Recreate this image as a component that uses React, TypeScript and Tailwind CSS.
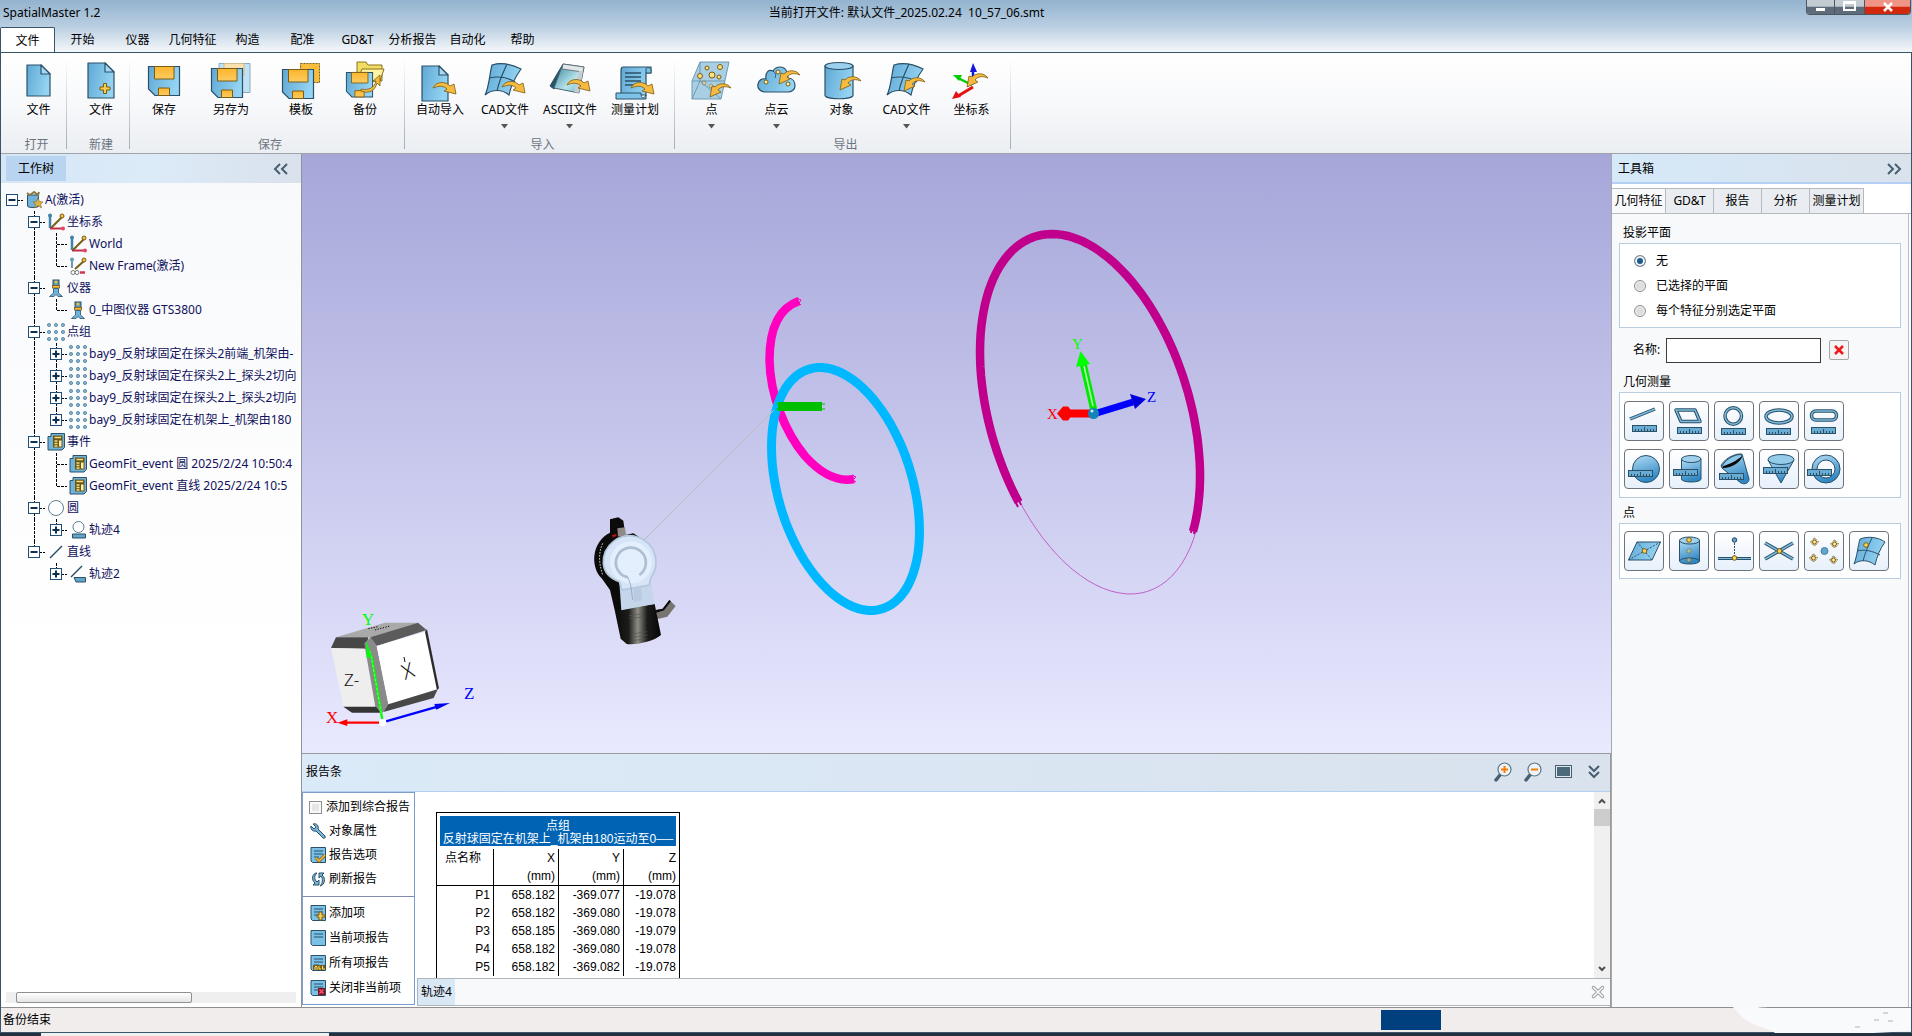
import { useState } from 'react'
import type { ReactNode } from 'react'

type Point = { name: string; x: string; y: string; z: string }
type Guide = 'none' | 'line' | 'tee' | 'elbow'

interface TreeRow {
  label: string
  icon: string
  guides: Guide[]
  box?: 'minus' | 'plus'
}

const MENU = ['文件', '开始', '仪器', '几何特征', '构造', '配准', 'GD&T', '分析报告', '自动化', '帮助']

const TREE: TreeRow[] = [
  { label: 'A(激活)', icon: 'job', guides: ['none'], box: 'minus' },
  { label: '坐标系', icon: 'frame', guides: ['none', 'tee'], box: 'minus' },
  { label: 'World', icon: 'frame', guides: ['none', 'line', 'tee'] },
  { label: 'New Frame(激活)', icon: 'frameActive', guides: ['none', 'line', 'elbow'] },
  { label: '仪器', icon: 'device', guides: ['none', 'tee'], box: 'minus' },
  { label: '0_中图仪器 GTS3800', icon: 'device', guides: ['none', 'line', 'elbow'] },
  { label: '点组', icon: 'points', guides: ['none', 'tee'], box: 'minus' },
  { label: 'bay9_反射球固定在探头2前端_机架由-', icon: 'points', guides: ['none', 'line', 'tee'], box: 'plus' },
  { label: 'bay9_反射球固定在探头2上_探头2切向', icon: 'points', guides: ['none', 'line', 'tee'], box: 'plus' },
  { label: 'bay9_反射球固定在探头2上_探头2切向', icon: 'points', guides: ['none', 'line', 'tee'], box: 'plus' },
  { label: 'bay9_反射球固定在机架上_机架由180', icon: 'points', guides: ['none', 'line', 'elbow'], box: 'plus' },
  { label: '事件', icon: 'event', guides: ['none', 'tee'], box: 'minus' },
  { label: 'GeomFit_event 圆 2025/2/24 10:50:4', icon: 'event', guides: ['none', 'line', 'tee'] },
  { label: 'GeomFit_event 直线 2025/2/24 10:5', icon: 'event', guides: ['none', 'line', 'elbow'] },
  { label: '圆', icon: 'circle', guides: ['none', 'tee'], box: 'minus' },
  { label: '轨迹4', icon: 'circleRuler', guides: ['none', 'line', 'elbow'], box: 'plus' },
  { label: '直线', icon: 'line', guides: ['none', 'elbow'], box: 'minus' },
  { label: '轨迹2', icon: 'lineRuler', guides: ['none', 'none', 'elbow'], box: 'plus' },
]

const POINTS: Point[] = [
  { name: 'P1', x: '658.182', y: '-369.077', z: '-19.078' },
  { name: 'P2', x: '658.182', y: '-369.080', z: '-19.078' },
  { name: 'P3', x: '658.185', y: '-369.080', z: '-19.079' },
  { name: 'P4', x: '658.182', y: '-369.080', z: '-19.078' },
  { name: 'P5', x: '658.182', y: '-369.082', z: '-19.078' },
]

const TOOL_TABS = [
  { label: '几何特征', width: 'w-[54px]' },
  { label: 'GD&T', width: 'w-12' },
  { label: '报告', width: 'w-12' },
  { label: '分析', width: 'w-12' },
  { label: '测量计划', width: 'w-[54px]' },
]

const INK = '#2b5068'
const GOLD = '#f9bd3b'
const GOLD_INK = '#7b5c14'

function Gradients() {
  return (
    <svg className="absolute h-0 w-0" aria-hidden="true">
      <defs>
        <linearGradient id="blue" x1="0" x2="1" y1="0" y2="0.3">
          <stop offset="0" stopColor="#5fa8d4" />
          <stop offset="1" stopColor="#94d3f2" />
        </linearGradient>
        <linearGradient id="solid" x1="0" x2="0.3" y1="0" y2="1">
          <stop offset="0" stopColor="#b4def5" />
          <stop offset="1" stopColor="#2f87c4" />
        </linearGradient>
        <linearGradient id="gold" x1="0" x2="0" y1="0" y2="1">
          <stop offset="0" stopColor="#fbb62c" />
          <stop offset="1" stopColor="#fccb63" />
        </linearGradient>
        <linearGradient id="glass" x1="0" x2="1" y1="0" y2="1">
          <stop offset="0" stopColor="#2f8098" />
          <stop offset="0.6" stopColor="#b9e4ec" />
          <stop offset="1" stopColor="#5cb3c9" />
        </linearGradient>
        <linearGradient id="barrel" x1="0" x2="1" y1="0" y2="0">
          <stop offset="0" stopColor="#0a0a0a" />
          <stop offset="0.3" stopColor="#1c1c1a" />
          <stop offset="0.5" stopColor="#8f8e85" />
          <stop offset="0.7" stopColor="#1c1c1a" />
          <stop offset="1" stopColor="#050505" />
        </linearGradient>
      </defs>
    </svg>
  )
}

// ---------- ribbon icons, 40x40 ----------

function Floppy({ x, y, size = 32 }: { x: number; y: number; size?: number }) {
  return (
    <g transform={`translate(${x} ${y}) scale(${size / 32})`}>
      <path d="M.5 .5H31.5V29.5H7L.5 23Z" fill="url(#blue)" stroke={INK} strokeWidth="1.2" />
      <path d="M6.5 .5H26V13H6.5Z" fill="url(#gold)" stroke={GOLD_INK} />
      <path d="M10.500 22H21.500V29.500H10.500Z" fill="url(#gold)" stroke={GOLD_INK} />
    </g>
  )
}

function Sheet({ x, y, w, h }: { x: number; y: number; w: number; h: number }) {
  return (
    <g transform={`translate(${x} ${y})`} stroke={INK} strokeWidth="1.2" strokeLinejoin="round">
      <path d={`M0 0H${w - 9}L${w} 9V${h}H0Z`} fill="url(#blue)" />
      <path d={`M${w - 9} 0V9H${w}Z`} fill="#a6daf3" />
    </g>
  )
}

// curved arrow leaving (import) or entering (export) the object
function SwoopOut({ x, y }: { x: number; y: number }) {
  return (
    <path
      transform={`translate(${x} ${y})`}
      d="M0 6C3 -1 13 -1 17 4L21 2L23 12L11 9L14 7C10 3 5 4 0 6Z"
      fill="#f5ba3e"
      stroke={GOLD_INK}
      strokeWidth="0.8"
      strokeLinejoin="round"
    />
  )
}

function SwoopIn({ x, y }: { x: number; y: number }) {
  return (
    <path
      transform={`translate(${x} ${y})`}
      d="M21 5C17 -1 8 0 5 4L2 3L0 14L11 9L8 7C11 3 16 3 21 5Z"
      fill="#f5ba3e"
      stroke={GOLD_INK}
      strokeWidth="0.8"
      strokeLinejoin="round"
    />
  )
}

function Patch() {
  return (
    <g stroke={INK} strokeWidth="1.2" fill="none">
      <path d="M7 4C16 1 26 3 36 8C31 15 26 24 24 34C17 28 7 28 0 34C4 27 5 10 7 4Z" fill="url(#blue)" />
      <path d="M22 3C18 12 14 20 12 30M4 17C13 15 22 16 30 21" />
    </g>
  )
}

function RibbonIcon({ name }: { name: string }) {
  const art: Record<string, ReactNode> = {
    open: <Sheet x={8} y={4} w={23} h={31} />,
    create: (
      <>
        <Sheet x={7} y={2} w={26} h={35} />
        <path d="M22.500 22.500H25.500V26H29V29H25.500V32.500H22.500V29H19V26H22.500Z" fill="#f8cd4a" stroke={GOLD_INK} strokeWidth="1" />
      </>
    ),
    save: <Floppy x={4} y={5} />,
    saveAs: (
      <>
        <path d="M8 2.500H39V31.500H30V9H8Z" fill="#c1e2f4" stroke="#8badc0" />
        <path d="M13 2.500H33V14H30V8H13Z" fill="#fbe1ad" stroke="#cdbb8b" />
        <Floppy x={0} y={7} />
      </>
    ),
    template: (
      <>
        <path d="M19.500 2.500H38.500V21.500H19.500Z" fill={GOLD} stroke={GOLD_INK} strokeDasharray="2 1" />
        <Floppy x={1} y={8} />
      </>
    ),
    backup: (
      <>
        <path d="M12 1H21L23 4H37V20H12Z" fill="#f2dc63" stroke="#8a741c" />
        <path d="M12 20L17 8H39L35 20Z" fill="#fdf3a0" stroke="#8a741c" />
        <Floppy x={1} y={11} size={27} />
        <path d="M16 28C24 30 30 26 31 20L28 20L35 14V25L32 22C30 30 24 33 16 30Z" fill="#f5ba3e" stroke={GOLD_INK} strokeWidth="0.8" />
      </>
    ),
    autoImport: (
      <>
        <Sheet x={2} y={5} w={26} h={35} />
        <SwoopOut x={13} y={21} />
      </>
    ),
    cadImport: (
      <>
        <Patch />
        <SwoopOut x={17} y={20} />
      </>
    ),
    ascii: (
      <>
        <path d="M13 3L0 25L4 28L15 10Z" fill="#24566b" stroke={INK} />
        <path d="M13 3L34 6L29 32L4 27Z" fill="url(#glass)" stroke="#53666e" />
        <path d="M13 3L34 6L33 11L12 8Z" fill="#e2e7ea" stroke="#53666e" strokeWidth="0.8" />
        <path d="M29 10L33 10L29 32L24 31Z" fill="#c6ccd0" />
        <SwoopOut x={17} y={18} />
      </>
    ),
    plan: (
      <>
        <path d="M8 6H36V12H31V34H6V12C6 8 6 6 8 6Z" fill="url(#blue)" stroke={INK} strokeWidth="1.2" />
        <path d="M31 12V8C31 6 36 6 36 9V12ZM1 32H26C26 38 29 38 31 34V38H1Z" fill="#7dc3e8" stroke={INK} />
        <path d="M10 12H26M10 16H26M10 20H26M10 24H20" stroke={INK} strokeWidth="1.4" />
        <SwoopOut x={16} y={21} />
      </>
    ),
    points: (
      <>
        <path d="M8 1H37L29 38H0V20Z" fill="#a9cfe4" stroke="#6f9ab4" />
        <path d="M0 20H33M8 1V20L0 38M8 20L29 38" stroke="#6f9ab4" fill="none" />
        <g fill="#fce079" stroke={GOLD_INK}>
          <circle cx="15" cy="7" r="2" />
          <circle cx="28" cy="6" r="2.500" />
          <circle cx="8" cy="15" r="2.500" />
          <circle cx="20" cy="14" r="3" />
          <circle cx="27" cy="16" r="2" />
          <circle cx="12" cy="22" r="2" opacity="0.5" />
          <circle cx="19" cy="25" r="2" opacity="0.5" />
        </g>
        <SwoopIn x={18} y={22} />
      </>
    ),
    cloud: (
      <>
        <path
          d="M9 31C3 31 0 27 1 23C2 19 5 17 9 18C8 11 12 8 16 10C19 5 27 4 30 11C31 13 31 15 31 17C36 17 38 21 38 25C38 29 34 31 31 31Z"
          fill="url(#blue)"
          stroke={INK}
          strokeWidth="1.2"
        />
        <path d="M16 10C19 12 19 15 18 17" stroke={INK} fill="none" />
        <g fill="#fff0b0" stroke={GOLD_INK}>
          <circle cx="21" cy="11" r="2" />
          <circle cx="9" cy="21" r="2" />
          <circle cx="31" cy="23" r="2" />
        </g>
        <SwoopIn x={22} y={9} />
      </>
    ),
    object: (
      <>
        <path d="M3 5V34C3 39 31 39 31 34V5Z" fill="url(#blue)" stroke={INK} strokeWidth="1.2" />
        <ellipse cx="17" cy="5" rx="14" ry="3.500" fill="#9bd0ee" stroke={INK} strokeWidth="1.200" />
        <SwoopIn x={18} y={15} />
      </>
    ),
    cadExport: (
      <>
        <Patch />
        <SwoopIn x={17} y={16} />
      </>
    ),
    axes: (
      <>
        <path d="M21 23V9" stroke="#1414e0" strokeWidth="2.500" />
        <path d="M21 2L25 11H18Z" fill="#1414e0" />
        <path d="M20 24L6 17" stroke="#0c0" strokeWidth="2.500" />
        <path d="M1 14L10 14L7 20Z" fill="#0c0" />
        <path d="M21 26L6 35" stroke="#e51212" strokeWidth="3" />
        <path d="M0 38L4 30L9 36Z" fill="#e51212" />
        <SwoopIn x={15} y={12} />
      </>
    ),
  }
  return <svg viewBox="0 0 40 40" className="h-10 w-10 overflow-visible" aria-hidden="true">{art[name]}</svg>
}

function RibbonButton({ icon, label, arrow, width = 'w-[65px]' }: { icon: string; label: string; arrow?: boolean; width?: string }) {
  return (
    <button className={`${width} flex h-[76px] shrink-0 flex-col items-center leading-[17px] hover:bg-sky-100`}>
      <RibbonIcon name={icon} />
      <span className="whitespace-nowrap">{label}</span>
      {arrow && (
        <svg viewBox="0 0 8 5" className="mt-[6px] h-[5px] w-2" aria-hidden="true">
          <path d="M0 0H7L3.500 4.500Z" fill="#555" />
        </svg>
      )}
    </button>
  )
}

function RibbonGroup({ title, width, pad = '', children }: { title: string; width: string; pad?: string; children: ReactNode }) {
  return (
    <section className={`${width} flex shrink-0 flex-col justify-between pt-2 pb-1`}>
      <div className={`${pad} flex justify-center`}>{children}</div>
      <h2 className="pl-[6px] text-center leading-4 text-[#6d7480]">{title}</h2>
    </section>
  )
}

function Separator() {
  return <div className="my-1 w-px shrink-0 bg-linear-to-b from-white to-[#a3adba]" />
}

function Ribbon() {
  return (
    <div className="flex h-[101px] shrink-0 border-b border-[#a0a4a8] bg-linear-to-b from-white via-[#f8f9fb] to-[#ebeef2]">
      <RibbonGroup title="打开" width="w-[65px]" pad="pl-[10px]">
        <RibbonButton icon="open" label="文件" width="w-[50px]" />
      </RibbonGroup>
      <Separator />
      <RibbonGroup title="新建" width="w-[62px]" pad="pl-[6px]">
        <RibbonButton icon="create" label="文件" width="w-[50px]" />
      </RibbonGroup>
      <Separator />
      <RibbonGroup title="保存" width="w-[274px]" pad="pr-[10px]">
        <RibbonButton icon="save" label="保存" width="w-[66px]" />
        <RibbonButton icon="saveAs" label="另存为" width="w-[68px]" />
        <RibbonButton icon="template" label="模板" width="w-[72px]" />
        <RibbonButton icon="backup" label="备份" width="w-14" />
      </RibbonGroup>
      <Separator />
      <RibbonGroup title="导入" width="w-[269px]" pad="pr-1">
        <RibbonButton icon="autoImport" label="自动导入" />
        <RibbonButton icon="cadImport" label="CAD文件" arrow />
        <RibbonButton icon="ascii" label="ASCII文件" arrow />
        <RibbonButton icon="plan" label="测量计划" />
      </RibbonGroup>
      <Separator />
      <RibbonGroup title="导出" width="w-[335px]" pad="pr-[2px]">
        <RibbonButton icon="points" label="点" arrow />
        <RibbonButton icon="cloud" label="点云" arrow />
        <RibbonButton icon="object" label="对象" />
        <RibbonButton icon="cadExport" label="CAD文件" arrow />
        <RibbonButton icon="axes" label="坐标系" />
      </RibbonGroup>
      <Separator />
    </div>
  )
}

// ---------- work tree ----------

function TreeIcon({ name }: { name: string }) {
  const art: Record<string, ReactNode> = {
    job: (
      <>
        <path d="M2.500 4V15C2.500 17 13.500 17 13.500 15V4Z" fill="#6fb2da" stroke={INK} />
        <path d="M2 2L5 4L9 1L13 4L14 1" stroke="#8a7a4a" strokeWidth="2" fill="none" />
        <path d="M13 7L14.500 10.500L18 11L15.500 13L16.500 17L13 14.500L9.500 17L10.500 13L8 11L11.500 10.500Z" fill="#e0b040" stroke="#7b6a34" strokeWidth="0.600" />
      </>
    ),
    frame: (
      <>
        <path d="M3 2V15" stroke="#3f83ab" strokeWidth="2.500" />
        <circle cx="3" cy="2.500" r="2" fill="#3f83ab" />
        <path d="M4 15L15 4" stroke={GOLD_INK} strokeWidth="2" />
        <circle cx="15" cy="3" r="2" fill="#f0c040" stroke={GOLD_INK} />
        <path d="M3 15.500H15" stroke="#c03048" strokeWidth="2" />
        <circle cx="16" cy="15.500" r="2" fill="#e04860" />
      </>
    ),
    frameActive: (
      <>
        <path d="M3 2V11" stroke="#6a9ab8" strokeWidth="2" />
        <circle cx="3" cy="2.500" r="2" fill="#6a9ab8" />
        <path d="M6 12L15 4" stroke={GOLD_INK} strokeWidth="2" />
        <circle cx="15" cy="3" r="2" fill="#f0c040" stroke={GOLD_INK} />
        <path d="M11 15.500H16" stroke="#d03850" strokeWidth="2.500" />
        <circle cx="4" cy="15.500" r="2" fill="#fff" stroke="#777" />
        <circle cx="8" cy="15.500" r="2" fill="#fff" stroke="#777" />
      </>
    ),
    device: (
      <>
        <rect x="6" y="1" width="6" height="6" fill="#5596bb" stroke={INK} />
        <circle cx="9" cy="3" r="1.500" fill={GOLD} />
        <rect x="5.500" y="6.500" width="7" height="2.500" fill={GOLD} stroke={GOLD_INK} strokeWidth="0.800" />
        <path d="M6.500 9.500H11.500V14L15.500 17.500H11L9 15.500L7 17.500H2.500L6.500 14Z" fill="#6fb2da" stroke={INK} strokeWidth="0.800" />
      </>
    ),
    points: (
      <g fill="#7fb6d3" stroke="#4f7f99" strokeWidth="0.800">
        {[2, 9, 16].map((x) => [2, 9, 16].map((y) => <circle key={`${x}-${y}`} cx={x} cy={y} r="1.600" />))}
      </g>
    ),
    event: (
      <>
        <path d="M1 3.500H4V.500H17.500V14.500L15 17H1Z" fill="#6fb2da" stroke={INK} />
        <rect x="6" y="2.500" width="9.500" height="12" fill="#6b5714" />
        <path d="M7.500 4.500H14M7.500 8H10.500M7.500 10.500H10.500M7.500 13H10.500" stroke="#f6dd80" strokeWidth="1.500" />
        <rect x="12" y="7.500" width="2.500" height="6" fill="#fff0b0" />
      </>
    ),
    circle: <circle cx="9" cy="9" r="7.500" fill="#fff" stroke="#5b7f94" />,
    circleRuler: (
      <>
        <circle cx="9.500" cy="6" r="5.500" fill="#fff" stroke="#5b7f94" />
        <path d="M3.500 13H16.500V17H3.500Z" fill="#63a4cb" stroke={INK} />
      </>
    ),
    line: <path d="M3 15L15 3" stroke={INK} strokeWidth="1.500" />,
    lineRuler: (
      <>
        <path d="M2 12L13 1" stroke={INK} strokeWidth="1.500" />
        <path d="M5 12.500H16.500V17H7Z" fill="#63a4cb" stroke={INK} />
      </>
    ),
  }
  return <svg viewBox="0 0 18 18" className="h-[18px] w-[18px]" aria-hidden="true">{art[name]}</svg>
}

function GuideCell({ guide, joined, box }: { guide: Guide; joined: boolean; box?: 'minus' | 'plus' }) {
  return (
    <svg viewBox="0 0 22 22" className="h-[22px] w-[22px] shrink-0" aria-hidden="true">
      <g stroke="#000" strokeDasharray="3 1" shapeRendering="crispEdges">
        {(guide === 'line' || guide === 'tee') && <path d="M11.500 0V22" />}
        {guide === 'elbow' && <path d="M11.500 0V11" />}
        {joined && <path d="M12 11.500H22" />}
      </g>
      {box && (
        <>
          <rect x="5.500" y="5.500" width="11" height="11" fill="#fff" stroke="#1f4e79" />
          <path d={box === 'minus' ? 'M7.500 11H14.500' : 'M7.500 11H14.500M11 7.500V14.500'} stroke="#0d2f50" strokeWidth="2" />
        </>
      )}
    </svg>
  )
}

function WorkTree() {
  return (
    <aside className="flex w-[301px] shrink-0 flex-col border-r border-[#8f9499] bg-linear-to-b from-[#f8f9fb] to-white to-60%">
      <div className="flex h-[29px] shrink-0 items-center justify-between bg-linear-to-r from-[#d6e6f5] via-[#dcebf8] to-[#d9e1ec] pr-3 pl-[5px]">
        <h2 className="bg-[#b9d4f0] px-3 leading-[25px]">工作树</h2>
        <button aria-label="收起" className="text-[#46606f]">
          <svg viewBox="0 0 16 12" className="h-3 w-4" fill="none" stroke="currentColor" strokeWidth="2">
            <path d="M7 1L2 6L7 11M14 1L9 6L14 11" />
          </svg>
        </button>
      </div>
      <ul className="mr-[5px] grow overflow-hidden pt-[6px] text-[#10105c]">
        {TREE.map((row, i) => (
          <li key={i} className="flex h-[22px] items-center whitespace-nowrap">
            {row.guides.map((g, k) => {
              const last = k === row.guides.length - 1
              return <GuideCell key={k} guide={g} joined={last} box={last ? row.box : undefined} />
            })}
            <span className="flex w-[22px] shrink-0 justify-center">
              <TreeIcon name={row.icon} />
            </span>
            <span>{row.label}</span>
          </li>
        ))}
      </ul>
      <div className="mx-[5px] mb-1 flex h-[11px] shrink-0 bg-[#efefef] pl-[10px]">
        <div className="w-44 rounded-xs border border-[#8f8f8f] bg-linear-to-b from-white to-[#e4e4e4]" />
      </div>
    </aside>
  )
}

// ---------- 3D view ----------

// Projected circle: half extents plus the phase between both axes
function ring(cx: number, cy: number, hx: number, hy: number, from: number, to: number) {
  const phase = 69.8
  const pts: string[] = []
  for (let i = 0; i <= 90; i++) {
    const t = from + ((to - from) * i) / 90
    const x = cx + hx * Math.cos((t * Math.PI) / 180)
    const y = cy + hy * Math.cos(((t - phase) * Math.PI) / 180)
    pts.push(`${x.toFixed(1)},${y.toFixed(1)}`)
  }
  return pts.join(' ')
}

function Viewport() {
  return (
    <div className="min-h-0 grow bg-linear-to-b from-[#a6a6d9] to-[#e9e9ff]">
      <svg viewBox="302 154 1309 599" className="h-full w-full" fill="none" role="img" aria-label="三维视图">
        <polyline points={ring(1092, 414, 111, 180, 0, 360)} stroke="#c060c8" />
        <polyline points={ring(1090, 414, 110, 180, 130.5, 380.5)} stroke="#c0008c" strokeWidth="8.500" />
        <path d="M1015 501L1018 507M1019 500L1021 505M1192 527L1191 533M1195 528L1194 534" stroke="#c0008c" strokeWidth="2" />

        <path d="M799 301C776 309 769.500 333 769.500 360C770 395 785 432 805 456C822 475 838 482 854 479" stroke="#ff00c0" strokeWidth="8.500" />
        <path d="M797 298L801 300L799 303L801 305M852 475L856 477L853 480L856 482" stroke="#ff00c0" />
        <polyline points={ring(845.5, 489, 74, 121.5, 0, 360)} stroke="#00b8ff" strokeWidth="9" />
        <path d="M778 406.500H822" stroke="#00be00" strokeWidth="9" />
        <path d="M776 404H825M776 409H825" stroke="#00be00" />
        <path d="M774 410L643 541" stroke="#bcbcc4" />

        {/* tracker */}
        <g transform="translate(560 500) scale(0.3333)">
          <path d="M150 58L175 52L190 62L196 105L220 100L238 112L190 330H164L150 270L125 235C90 200 95 125 150 98Z" fill="#0b0b0b" />
          <path d="M172 85L195 82L198 106L174 110Z" fill="#8f8a84" />
          <path d="M156 105L168 102L170 108L158 112Z" fill="#c01010" />
          <path d="M128 130C112 165 120 200 128 225" stroke="#c4c4bc" strokeWidth="3" strokeDasharray="5 4" />
          <path d="M288 330L308 326L328 300L347 318L322 350L290 358Z" fill="#78746f" />
          <path d="M288 330L308 326L328 300L333 304L312 331L289 338Z" fill="#0a0a0a" />
          <path d="M164 330L284 312L303 405C280 425 225 436 200 432L182 416Z" fill="url(#barrel)" />
          <path d="M207 347L248 341M209 356L250 350M216 402L262 395M217 412L264 405M218 422L262 416" stroke="#555" strokeWidth="2" />
          <path d="M178 245L270 235L284 312L184 331Z" fill="#c5d5ea" />
          <path d="M130 190A79 79 0 1 1 272 234L268 255L186 270L178 245C150 235 132 215 130 190Z" fill="#d5e5f7" stroke="#b4c6dc" strokeWidth="5" />
          <circle cx="213" cy="187" r="63" fill="#e3effc" />
          <path d="M204 232A45 45 0 1 1 238 225" stroke="#aebed3" strokeWidth="8" />
          <path d="M204 232L212 255L218 300" stroke="#8b97a8" strokeWidth="2" />
          <path d="M220 262L242 258L246 300L222 306Z" fill="#b8cbe0" />
        </g>

        {/* frame triad */}
        <g>
          <path d="M1063 413.500H1093" stroke="#f00" strokeWidth="8" />
          <path d="M1057 413.500L1063 406.500H1068C1072 410 1072 417 1068 420.500H1063Z" fill="#f00" />
          <path d="M1094 411L1083 363" stroke="#00ea00" strokeWidth="7" />
          <path d="M1093 406L1084 366" stroke="#b8ffb8" strokeWidth="1.500" />
          <path d="M1080.500 351L1090 364L1076 367Z" fill="#0f0" />
          <path d="M1097 413L1133 402" stroke="#00f" strokeWidth="7" />
          <path d="M1130 394L1146 399L1135 409Z" fill="#00d" />
          <circle cx="1093.500" cy="413.500" r="5.500" fill="#1583b8" />
          <circle cx="1092" cy="411" r="1.500" fill="#c8eeff" />
        </g>
        <g className="font-['Liberation_Serif',serif]" fontSize="15">
          <text x="1047" y="419" fill="#f00">X</text>
          <text x="1072" y="349" fill="#0f0">Y</text>
          <text x="1147" y="402" fill="#00f">Z</text>
        </g>

        {/* orientation cube */}
        <g transform="translate(310 600) scale(0.3333)">
          <path d="M78 112L225 68H324L180 112Z" fill="#a9a9a9" />
          <path d="M180 112L324 68L350 90L200 138Z" fill="#5b5b5b" />
          <path d="M78 112L175 112L168 146L63 144Z" fill="#474747" />
          <path d="M63 144L163 146L198 320L100 320Z" fill="#eee" />
          <path d="M163 130L182 112L200 138L236 313L218 338L196 320Z" fill="#8a8a8a" />
          <path d="M200 138L345 95L381 268L235 313Z" fill="#fff" />
          <path d="M345 95L351 88L387 265L381 270Z" fill="#2c2c2c" />
          <path d="M100 320H198L214 338H126Z" fill="#343434" />
          <path d="M235 313L383 268L371 294L220 336Z" fill="#484848" />
          <path d="M175 86L205 80M195 90L240 78" stroke="#111" strokeWidth="3" strokeDasharray="4 4" />
          <path d="M218 366L185 170" stroke="#0f0" strokeWidth="7" />
          <path d="M214 340L180 150" stroke="#aaffaa" strokeWidth="2" strokeDasharray="8 6" />
          <path d="M169 122L186 170L170 174Z" fill="#0f0" />
          <path d="M110 368H212" stroke="#f00" strokeWidth="7" />
          <path d="M82 368L112 358V378Z" fill="#f00" />
          <path d="M228 364L380 321" stroke="#00f" strokeWidth="7" />
          <path d="M420 309L373 312L379 329Z" fill="#00e" />
          <circle cx="218" cy="368" r="11" fill="#fff" />
        </g>
        <text x="344" y="686" fontSize="17" fill="#111" className="font-['Noto_Sans',sans-serif] font-light">Z-</text>
        <text x="0" y="0" fontSize="21" fill="#111" transform="translate(405 680) rotate(-20)" className="font-['Noto_Sans',sans-serif] font-light">X</text>
        <path d="M404 657L405 662" stroke="#111" />
        <g className="font-['Liberation_Serif',serif]" fontSize="17">
          <text x="326" y="723" fill="#f00">X</text>
          <text x="362" y="625" fill="#0f0">Y</text>
          <text x="464" y="699" fill="#00f">Z</text>
        </g>
      </svg>
    </div>
  )
}

// ---------- report panel ----------

function ReportIcon({ name }: { name: string }) {
  const page = (
    <>
      <path d="M1 .500H15.500V15.500H2.500L1 14Z" fill="#7bc0e6" stroke={INK} />
      <path d="M4 4H13M4 7H13M4 10H9" stroke={INK} />
    </>
  )
  const art: Record<string, ReactNode> = {
    wrench: (
      <path d="M1 3L4 6L6 4L3 1C7 0 9 3 8 6L15 13C16 15 14 16 13 15L6 8C3 9 0 6 1 3Z" fill="#77b5d8" stroke={INK} />
    ),
    options: <>{page}<path d="M6 11L9 14L15 8" stroke={GOLD_INK} strokeWidth="3" fill="none" /><path d="M6 11L9 14L15 8" stroke={GOLD} strokeWidth="1.500" fill="none" /></>,
    refresh: (
      <>
        <path d="M7 2C2 2 1 9 5 12L3 14H9V9L7 11C4 8 4 5 7 2Z" fill="#77b5d8" stroke={INK} />
        <path d="M10 15C15 14 16 7 12 4L14 2H9V7L11 5C13 8 13 12 10 15Z" fill="#77b5d8" stroke={INK} />
      </>
    ),
    add: <>{page}<path d="M9 7H12V10H15V12H12V15H9V12H7V10H9Z" fill="#f8cd4a" stroke={GOLD_INK} /></>,
    current: <><path d="M1 .500H15.500V15.500H2.500L1 14Z" fill="#7bc0e6" stroke={INK} /><path d="M4 4H13M4 7H13" stroke={INK} /></>,
    all: <>{page}<path d="M3 10H15V15H3Z" fill={GOLD_INK} /><path d="M5 15V12L6 11L7 12V15M9 11V14H11M12.500 11V14H15" stroke="#ffe26a" fill="none" /></>,
    close: <>{page}<path d="M8 8H15V15H8Z" fill="#7a1420" /><path d="M9.500 9.500L13.500 13.500M13.500 9.500L9.500 13.500" stroke="#ff5566" strokeWidth="1.500" /></>,
  }
  return <svg viewBox="0 0 16 16" className="h-4 w-4 shrink-0" aria-hidden="true">{art[name]}</svg>
}

function SideAction({ icon, label, height }: { icon: string; label: string; height: string }) {
  return (
    <button className={`${height} flex items-center gap-[3px] pl-[7px] hover:bg-sky-50`}>
      <ReportIcon name={icon} />
      {label}
    </button>
  )
}

function Magnifier({ plus }: { plus?: boolean }) {
  return (
    <svg viewBox="0 0 18 20" className="h-5 w-[18px]" fill="none" aria-hidden="true">
      <path d="M6 13L2 18" stroke="#46606f" strokeWidth="3.500" strokeLinecap="round" />
      <circle cx="10.500" cy="7.500" r="6.500" fill="#edf3f8" stroke="#5d7786" strokeWidth="1.200" />
      <path d={plus ? 'M7 7.500H14M10.500 4V11' : 'M7 7.500H14'} stroke="#f57c00" strokeWidth="2" />
    </svg>
  )
}

function ReportPanel() {
  const cell = 'h-[18px] border-r border-black pr-[3px] text-right last:border-r-0'
  return (
    <section className="flex h-[254px] shrink-0 flex-col border-t border-r border-[#9a9a9a] bg-white">
      <div className="flex h-[38px] shrink-0 items-center justify-between border-b border-[#b3d0f0] bg-linear-to-r from-[#dbeaf8] to-[#d9e2ed] pr-[10px] pb-[2px] pl-1">
        <h2>报告条</h2>
        <div className="flex items-center gap-3">
          <button aria-label="放大"><Magnifier plus /></button>
          <button aria-label="缩小"><Magnifier /></button>
          <button aria-label="全屏">
            <svg viewBox="0 0 18 14" className="h-[14px] w-[18px]" aria-hidden="true">
              <rect x="1.500" y=".5" width="16" height="12" fill="#dfe8f1" stroke="#46606f" />
              <rect x="3" y="2" width="13" height="9" fill="#4d6a7b" />
            </svg>
          </button>
          <button aria-label="折叠" className="pl-1">
            <svg viewBox="0 0 12 14" className="h-[14px] w-3" fill="none" stroke="#46606f" strokeWidth="2" aria-hidden="true">
              <path d="M1 1L6 6L11 1M1 7L6 12L11 7" />
            </svg>
          </button>
        </div>
      </div>
      <div className="flex min-h-0 grow">
        <div className="mb-[2px] flex w-[113px] shrink-0 flex-col border border-[#7a9fcc] pt-[2px]">
          <label className="flex h-6 items-center gap-1 pl-[6px] whitespace-nowrap">
            <input type="checkbox" className="h-[13px] w-[13px] appearance-none border border-[#8e8f8f] bg-[#e6e6e6] shadow-[inset_0_0_0_2px_#f8f8f8]" />
            添加到综合报告
          </label>
          <SideAction icon="wrench" label="对象属性" height="h-6" />
          <SideAction icon="options" label="报告选项" height="h-6" />
          <SideAction icon="refresh" label="刷新报告" height="h-6" />
          <hr className="mt-[5px] mb-[3px] border-[#7f8cb0]" />
          <SideAction icon="add" label="添加项" height="h-[25px]" />
          <SideAction icon="current" label="当前项报告" height="h-[25px]" />
          <SideAction icon="all" label="所有项报告" height="h-[25px]" />
          <SideAction icon="close" label="关闭非当前项" height="h-[25px]" />
        </div>
        <div className="ml-[2px] flex min-w-0 grow flex-col">
          <div className="flex min-h-0 grow justify-between">
            <div className="overflow-hidden pt-5 pl-[19px] font-['Liberation_Sans','Noto_Sans_CJK_SC',sans-serif]">
              <div className="h-44 w-[244px] border border-black">
                <div className="m-[3px] h-[30px] overflow-hidden bg-[#0063b4] pt-1 text-center leading-[13px] whitespace-nowrap text-white">
                  <div>点组</div>
                  <div>反射球固定在机架上_机架由180运动至0──</div>
                </div>
                <table className="w-full table-fixed border-separate border-spacing-0">
                  <colgroup>
                    <col className="w-[57px]" />
                    <col className="w-[65px]" />
                    <col className="w-[65px]" />
                    <col />
                  </colgroup>
                  <thead>
                    <tr className="leading-[18px]">
                      <th className="border-r border-b border-black px-2 text-left align-top font-normal">点名称</th>
                      <th className="border-r border-b border-black pr-[3px] text-right font-normal">X<br />(mm)</th>
                      <th className="border-r border-b border-black pr-[3px] text-right font-normal">Y<br />(mm)</th>
                      <th className="border-b border-black pr-[3px] text-right font-normal">Z<br />(mm)</th>
                    </tr>
                  </thead>
                  <tbody className="leading-[18px]">
                    {POINTS.map((p) => (
                      <tr key={p.name}>
                        <td className={cell}>{p.name}</td>
                        <td className={cell}>{p.x}</td>
                        <td className={cell}>{p.y}</td>
                        <td className={cell}>{p.z}</td>
                      </tr>
                    ))}
                  </tbody>
                </table>
              </div>
            </div>
            <div className="flex w-4 flex-col items-center justify-between bg-[#f0f0f0] py-[6px]">
              <div className="flex w-full flex-col items-center gap-[5px]">
                <svg viewBox="0 0 8 6" className="h-[6px] w-2" fill="none" stroke="#505050" strokeWidth="2"><path d="M1 5L4 2L7 5" /></svg>
                <div className="h-[17px] w-full bg-[#cdcdcd]" />
              </div>
              <svg viewBox="0 0 8 6" className="h-[6px] w-2" fill="none" stroke="#505050" strokeWidth="2"><path d="M1 1L4 4L7 1" /></svg>
            </div>
          </div>
          <div className="mb-px flex h-7 shrink-0 items-center justify-between border-y border-[#b0b5bb] bg-[#f7f9fb] pr-[5px]">
            <button className="h-full border-l border-[#a5b4c4] bg-[#dae7f5] px-[3px]">轨迹4</button>
            <button aria-label="关闭">
              <svg viewBox="0 0 14 14" className="h-[14px] w-[14px]" fill="none" strokeLinecap="round" aria-hidden="true">
                <path d="M2.500 2.500L11.500 11.500M11.500 2.500L2.500 11.500" stroke="#9aa0a6" strokeWidth="3.500" />
                <path d="M2.500 2.500L11.500 11.500M11.500 2.500L2.500 11.500" stroke="#fff" strokeWidth="1.500" />
              </svg>
            </button>
          </div>
        </div>
      </div>
    </section>
  )
}

// ---------- tool box ----------

function Ruler({ x, y }: { x: number; y: number }) {
  return (
    <g transform={`translate(${x} ${y})`} stroke={INK}>
      <rect x=".5" y=".5" width="24" height="6" fill="#68acd3" />
      <path d="M3.500 6V4M6.500 6V4M9.500 6V4M12.500 6V2M15.500 6V4M18.500 6V4M21.500 6V4" fill="none" />
    </g>
  )
}

// double stroke: dark outline with a light blue core
function Tube({ d, width = 4 }: { d: string; width?: number }) {
  return (
    <g fill="none" strokeLinejoin="round">
      <path d={d} stroke={INK} strokeWidth={width} />
      <path d={d} stroke="#7dbbdc" strokeWidth={width - 2} />
    </g>
  )
}

function GoldDot({ x, y, faint }: { x: number; y: number; faint?: boolean }) {
  return <circle cx={x} cy={y} r="2.300" fill="#ffd452" stroke={GOLD_INK} opacity={faint ? 0.45 : 1} />
}

const MEASURE: { label: string; art: ReactNode }[] = [
  { label: '直线', art: <><Tube d="M6 18L31 8" width={3.5} /><Ruler x={8} y={24} /></> },
  { label: '平面', art: <><Tube d="M7 9H26L31 20.500H12Z" width={3.5} /><Ruler x={8} y={26} /></> },
  { label: '圆', art: <><Tube d="M11 15A8 8 0 1 1 27.500 15A8 8 0 1 1 11 15Z" width={3.5} /><Ruler x={7} y={27} /></> },
  { label: '椭圆', art: <><Tube d="M7 15.500A13 6.500 0 1 1 33 15.500A13 6.500 0 1 1 7 15.500Z" width={3.5} /><Ruler x={7} y={27} /></> },
  { label: '键槽', art: <><Tube d="M12 10H28A4.500 4.500 0 0 1 28 19H12A4.500 4.500 0 0 1 12 10Z" width={3.5} /><Ruler x={7} y={26} /></> },
  { label: '球', art: <><circle cx="22" cy="20" r="13.500" fill="url(#solid)" stroke={INK} /><Ruler x={4} y={21} /></> },
  {
    label: '圆柱',
    art: (
      <>
        <path d="M12.500 10V30C12.500 34 32 34 32 30V10Z" fill="url(#solid)" stroke={INK} />
        <ellipse cx="22.250" cy="10" rx="9.750" ry="3.500" fill="#9fd0ec" stroke={INK} />
        <Ruler x={4} y={20} />
      </>
    ),
  },
  {
    label: '斜圆柱',
    art: (
      <>
        <path d="M7 17C9 11 20 4 28 5L35 30C35 34 31 36 27 34L9 20Z" fill="url(#solid)" stroke={INK} />
        <path d="M8 17C12 9 24 4 28 6C29 10 20 16 8 19Z" fill="#8cc8ea" stroke={INK} />
        <path d="M9 17C14 16 24 11 28 7C27 13 18 19 9 19Z" fill="#0a0a0a" />
        <Ruler x={5} y={24} />
      </>
    ),
  },
  {
    label: '圆锥',
    art: (
      <>
        <path d="M9 11L22 34L35 11Z" fill="url(#solid)" stroke={INK} />
        <ellipse cx="22" cy="10.500" rx="13" ry="5" fill="#93cbe9" stroke={INK} />
        <Ruler x={4} y={18} />
      </>
    ),
  },
  {
    label: '圆环',
    art: (
      <>
        <circle cx="22" cy="20" r="14" fill="url(#solid)" stroke={INK} />
        <circle cx="22" cy="20" r="9" fill="#f6faff" stroke={INK} />
        <Ruler x={3} y={20} />
      </>
    ),
  },
]

const POINT_TOOLS: { label: string; art: ReactNode }[] = [
  {
    label: '平面点',
    art: (
      <>
        <path d="M4.500 29L13 11H36.500L28 29Z" fill="url(#blue)" stroke={INK} />
        <path d="M4.500 29L36.500 11M13 11L28 29" stroke={INK} strokeDasharray="2 1.500" />
        <GoldDot x={20.5} y={20} />
      </>
    ),
  },
  {
    label: '圆柱点',
    art: (
      <>
        <path d="M10.500 9V30C10.500 34 30.500 34 30.500 30V9Z" fill="url(#solid)" stroke={INK} />
        <ellipse cx="20.500" cy="9.500" rx="10" ry="3.500" fill="#9fd0ec" stroke={INK} />
        <path d="M10.500 30C12 26 29 26 30.500 30" stroke={INK} fill="none" />
        <GoldDot x={20} y={9} />
        <GoldDot x={20} y={20} faint />
        <GoldDot x={20} y={29} faint />
      </>
    ),
  },
  {
    label: '垂足点',
    art: (
      <>
        <path d="M20.500 12V25" stroke={INK} strokeDasharray="2 1" />
        <Tube d="M4 27.500H37" width={3} />
        <circle cx="20.500" cy="9" r="2.300" fill="#5d9fc6" stroke={INK} />
        <GoldDot x={20.5} y={27} />
      </>
    ),
  },
  { label: '交点', art: <><Tube d="M6 12L34 28M6 28L34 12" width={3.5} /><GoldDot x={20.5} y={20} /></> },
  {
    label: '中心点',
    art: (
      <>
        {[[10.5, 11], [30.5, 13], [9.5, 27], [29.5, 29]].map(([x, y]) => (
          <g key={x}>
            <path d={`M${x} ${y - 4}L${x + 4} ${y}L${x} ${y + 4}L${x - 4} ${y}Z`} fill="none" stroke={GOLD_INK} strokeDasharray="3 1" />
            <circle cx={x} cy={y} r="2" fill="#ffe98a" stroke={GOLD_INK} />
          </g>
        ))}
        <circle cx="20.500" cy="20" r="3.500" fill="#5fa5d0" stroke="#4a80a3" />
      </>
    ),
  },
  {
    label: '曲面点',
    art: (
      <>
        <path d="M11 8C19 5 29 6 36 11C31 18 28 25 26 34C20 29 11 28 5 33C8 26 9 14 11 8Z" fill="url(#blue)" stroke={INK} />
        <path d="M23 7C19 15 16 22 14 30M8 20C15 18 24 20 31 24" stroke={INK} fill="none" />
        <GoldDot x={17} y={14} />
      </>
    ),
  },
]

function ToolGrid({ tools, perRow }: { tools: { label: string; art: ReactNode }[]; perRow: string }) {
  return (
    <div className={`grid ${perRow} gap-x-[5px] gap-y-2`}>
      {tools.map((tool) => (
        <button
          key={tool.label}
          aria-label={tool.label}
          className="h-10 w-10 rounded border border-[#6e747b] bg-linear-to-b from-white to-[#e7f0fb]"
        >
          <svg viewBox="1 1 38 38" className="h-[38px] w-[38px]" fill="none" aria-hidden="true">{tool.art}</svg>
        </button>
      ))}
    </div>
  )
}

function ToolBox() {
  const [tab, setTab] = useState('几何特征')
  const [plane, setPlane] = useState('无')
  const [name, setName] = useState('')

  return (
    <aside className="flex w-[300px] shrink-0 flex-col border-l border-[#a4a9af] bg-white">
      <div className="flex h-[30px] shrink-0 items-center justify-between border-b-2 border-[#b3d0f4] bg-linear-to-r from-[#d5e9f9] to-[#dae2ec] pt-px pr-[9px] pl-[6px]">
        <h2>工具箱</h2>
        <button aria-label="收起">
          <svg viewBox="0 0 16 12" className="h-3 w-4" fill="none" stroke="#46606f" strokeWidth="2">
            <path d="M2 1L7 6L2 11M9 1L14 6L9 11" />
          </svg>
        </button>
      </div>
      <div className="mt-1 flex shrink-0 border-b border-[#b6babe]" role="tablist">
        {TOOL_TABS.map((t) => (
          <button
            key={t.label}
            role="tab"
            aria-selected={tab === t.label}
            onClick={() => setTab(t.label)}
            className={`${t.width} h-[25px] border-t border-r border-[#b6babe] whitespace-nowrap ${tab === t.label ? 'bg-[#f8f9fb]' : 'bg-[#e9ecf0]'}`}
          >
            <span className="flex justify-center">{t.label}</span>
          </button>
        ))}
      </div>
      <div className="mr-[2px] flex grow flex-col border-r border-[#b6babe] bg-[#f7f9fb] px-[7px]">
        <fieldset>
          <legend className="pt-[10px] pb-px pl-1 leading-[18px]">投影平面</legend>
          <div className="flex flex-col border border-[#b9cce0] bg-white py-1 pl-[14px]">
            {['无', '已选择的平面', '每个特征分别选定平面'].map((p) => (
              <label key={p} className="flex h-[25px] items-center gap-[10px]">
                <input
                  type="radio"
                  name="plane"
                  checked={plane === p}
                  onChange={() => setPlane(p)}
                  className="h-3 w-3 appearance-none rounded-full border border-[#8e8f8f] bg-[#dedede] shadow-[inset_0_0_0_1px_#f6f6f6] checked:bg-[#1c5a8c] checked:shadow-[inset_0_0_0_2px_#f0f4f8]"
                />
                {p}
              </label>
            ))}
          </div>
        </fieldset>
        <div className="mt-[9px] flex h-[26px] items-center pl-[14px]">
          <label htmlFor="feature-name" className="w-[33px]">名称:</label>
          <input
            id="feature-name"
            value={name}
            onChange={(e) => setName(e.target.value)}
            className="h-[25px] w-[155px] border border-[#3c3c3c] bg-white px-1"
          />
          <button aria-label="清除" onClick={() => setName('')} className="ml-2 flex h-5 w-5 items-center justify-center rounded-xs border border-[#a6a6a6] bg-[#f4f4f4]">
            <svg viewBox="0 0 10 10" className="h-[10px] w-[10px]"><path d="M1 1L9 9M9 1L1 9" stroke="#f01818" strokeWidth="2.500" /></svg>
          </button>
        </div>
        <h3 className="pt-[10px] pb-px pl-1 leading-[18px]">几何测量</h3>
        <div className="h-[106px] border border-[#b9cce0] bg-white px-1 py-2">
          <ToolGrid tools={MEASURE} perRow="grid-cols-[repeat(5,40px)]" />
        </div>
        <h3 className="pt-[6px] pb-px pl-1 leading-[18px]">点</h3>
        <div className="border border-[#b9cce0] bg-white px-1 py-[7px]">
          <ToolGrid tools={POINT_TOOLS} perRow="grid-cols-[repeat(6,40px)]" />
        </div>
      </div>
    </aside>
  )
}

// ---------- window ----------

function TitleBar() {
  return (
    <div className="flex h-[25px] shrink-0 items-start">
      <h1 className="w-2/5 pl-[3px] leading-[25px]">SpatialMaster 1.2</h1>
      <div className="pl-1 leading-[25px] whitespace-pre">当前打开文件: 默认文件_2025.02.24  10_57_06.smt</div>
      <div className="flex flex-1 justify-end pr-px">
        <div className="flex h-[15px] overflow-hidden rounded-b border border-t-0 border-[#4d5760]">
          <button aria-label="最小化" className="flex w-7 justify-center border-r border-[#4d5760] bg-linear-to-b from-[#c4ccd3] from-45% to-[#5d6b7a] to-50% pt-2">
            <span className="h-[3px] w-[9px] bg-white" />
          </button>
          <button aria-label="最大化" className="flex w-[30px] justify-center border-r border-[#4d5760] bg-linear-to-b from-[#c4ccd3] from-45% to-[#5d6b7a] to-50% pt-px">
            <span className="h-[10px] w-[13px] border-2 border-t-3 border-white" />
          </button>
          <button aria-label="关闭窗口" className="flex w-[45px] items-center justify-center bg-linear-to-b from-[#f09488] from-45% to-[#d2290e] to-50%">
            <svg viewBox="0 0 12 10" className="h-[10px] w-3"><path d="M2 1L10 9M10 1L2 9" stroke="#fff" strokeWidth="2.500" /></svg>
          </button>
        </div>
      </div>
    </div>
  )
}

export default function App() {
  const [menu, setMenu] = useState('文件')

  return (
    <div className="flex h-screen flex-col overflow-hidden bg-white font-['Noto_Sans','Noto_Sans_CJK_SC',sans-serif] text-xs text-black">
      <Gradients />
      <header className="shrink-0 bg-linear-to-b from-[#93b3cf] via-[#b9cee1] to-[#f8fafb]">
        <TitleBar />
        <nav className="flex h-7 items-end border-b border-[#38556a] pt-[2px]">
          {MENU.map((m) => (
            <button
              key={m}
              onClick={() => setMenu(m)}
              className={`h-full w-[55px] pt-px whitespace-nowrap ${menu === m ? 'rounded-t-xs border border-b-0 border-[#38556a] bg-white' : ''}`}
            >
              <span className="flex justify-center">{m}</span>
            </button>
          ))}
        </nav>
      </header>
      <div className="flex min-h-0 grow flex-col border-x border-[#38556a]">
        <Ribbon />
        <main className="flex min-h-0 grow">
          <WorkTree />
          <div className="flex min-w-0 grow flex-col">
            <Viewport />
            <ReportPanel />
          </div>
          <ToolBox />
        </main>
        <footer className="flex h-[26px] shrink-0 items-center border-y border-t-[#8f8f8f] border-b-[#38556a] bg-[#f1edec] pl-[2px]">
          <span className="w-[1378px] shrink-0">备份结束</span>
          <div className="h-5 w-[60px] bg-[#00407f]" />
          <svg viewBox="0 0 180 28" className="-my-px ml-auto h-[28px] w-[180px] shrink-0" aria-hidden="true">
            <path d="M2 1C20 -1 28 2 36 2H180V24C150 29 80 27 44 27C40 23 20 20 10 10Z" fill="#f9fafc" />
            <path d="M152 7H157M143 14H148M157 15H162M124 21H129" stroke="#c3ccd8" strokeWidth="1.500" />
          </svg>
        </footer>
      </div>
      <div className="flex h-[3px] shrink-0 bg-[#25303f]">
        <div className="ml-[41px] w-72 bg-[#eef0f2]" />
      </div>
    </div>
  )
}
